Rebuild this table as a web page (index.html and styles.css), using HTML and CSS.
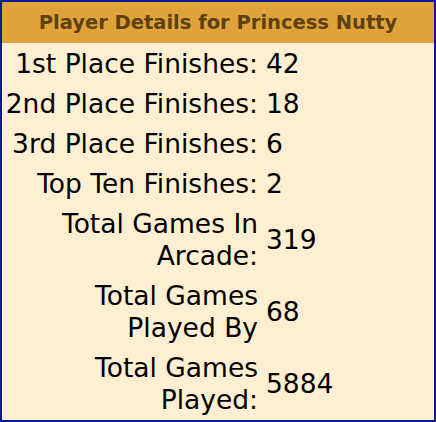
FILE: index.html
```html
<!DOCTYPE html>
<html>
<head>
<meta charset="utf-8">
<link rel="stylesheet" href="styles.css">
</head>
<body>
<div class="panel">
  <div class="title">Player Details for Princess Nutty</div>
  <div class="stats">
    <div class="label">1st Place Finishes:</div><div class="value">42</div>
    <div class="label">2nd Place Finishes:</div><div class="value">18</div>
    <div class="label">3rd Place Finishes:</div><div class="value">6</div>
    <div class="label">Top Ten Finishes:</div><div class="value">2</div>
    <div class="label">Total Games In Arcade:</div><div class="value">319</div>
    <div class="label">Total Games Played By</div><div class="value">68</div>
    <div class="label">Total Games Played:</div><div class="value">5884</div>
  </div>
</div>
</body>
</html>
```

FILE: styles.css
```css
html, body {
  margin: 0;
  padding: 0;
  background: #ffefd2;
}
.panel {
  width: 436px;
  height: 422px;
  box-sizing: border-box;
  border: 2px solid #0b1a8c;
  background: #ffefd2;
  overflow: hidden;
}
.title {
  height: 41px;
  background: #e0a33a;
  color: #5e4110;
  font-family: "DejaVu Sans", Verdana, sans-serif;
  font-weight: bold;
  font-size: 19.5px;
  display: flex;
  align-items: center;
  justify-content: center;
  white-space: nowrap;
}
.stats {
  display: grid;
  grid-template-columns: 257px auto;
  column-gap: 2px;
  row-gap: 2px;
  padding: 2px 2px 0 2px;
  font-family: "DejaVu Sans", Verdana, sans-serif;
  font-size: 26.5px;
  line-height: 32px;
  color: #000;
}
.label {
  padding: 3px 3px 3px 0;
  text-align: right;
}
.value {
  padding: 3px;
  display: flex;
  align-items: center;
}
```
